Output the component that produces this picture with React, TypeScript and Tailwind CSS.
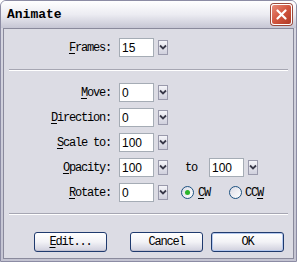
import type { ReactNode } from 'react'

// ─── Bits ─────────────────────────────────────────────────────────────────────

const mono = "font-['Liberation_Mono','DejaVu_Sans_Mono',monospace] text-[12px] tracking-[-1.2px] text-black"

function Label({ text, u = 0 }: { text: string; u?: number }) {
  return (
    <span className={mono}>
      {text.slice(0, u)}
      <span className="underline underline-offset-2">{text[u]}</span>
      {text.slice(u + 1)}
    </span>
  )
}

function Field({ value }: { value: string }) {
  return (
    <div className="w-[35px] h-[19px] bg-white border border-[#a5acb5] flex items-center pl-[2px] font-['Liberation_Sans',Arial,sans-serif] text-[12px] text-black leading-none">
      {value}
    </div>
  )
}

function Drop() {
  return (
    <svg width="10" height="15" viewBox="0 0 10 15" className="ml-[4px] shrink-0">
      <defs>
        <linearGradient id="dg" x1="0" y1="0" x2="0" y2="1">
          <stop offset="0" stopColor="#f6f6fa" />
          <stop offset="1" stopColor="#cfcfdc" />
        </linearGradient>
      </defs>
      <rect x="0.5" y="0.5" width="9" height="14" fill="url(#dg)" stroke="#9a9aac" />
      <path d="M2 5.5 L5 8.5 L8 5.5" fill="none" stroke="#3a3a4a" strokeWidth="1.8" />
    </svg>
  )
}

function Radio({ on }: { on?: boolean }) {
  return (
    <span className="w-[13px] h-[13px] rounded-full border border-[#1c5180] bg-gradient-to-br from-[#dcdce6] to-white flex items-center justify-center shrink-0">
      {on && <span className="w-[5px] h-[5px] rounded-full bg-[#2bb52b]" />}
    </span>
  )
}

function Row({ label, u, value, children }: { label: string; u?: number; value: string; children?: ReactNode }) {
  return (
    <div className="flex items-center h-[19px]">
      <div className="w-[108px] flex justify-end pr-[1px]">
        <Label text={label} u={u} />
      </div>
      <div className="ml-[7px]">
        <Field value={value} />
      </div>
      <Drop />
      {children}
    </div>
  )
}

function Sep() {
  return <div className="mx-[5px] h-[2px] border-t border-[#a6a6b2] border-b border-b-white" />
}

function Btn({ children, def }: { children: ReactNode; def?: boolean }) {
  return (
    <div
      className={
        'w-[73px] h-[20px] rounded-[3px] border border-[#1f3a6e] bg-gradient-to-b from-white via-[#f2f2f6] to-[#cfcfdd] flex items-center justify-center ' +
        (def ? 'shadow-[inset_0_0_0_1px_#b4c8ee]' : 'shadow-[inset_0_-1px_0_#c0c0d0]')
      }
    >
      {children}
    </div>
  )
}

// ─── App ──────────────────────────────────────────────────────────────────────

export default function App() {
  return (
    <div className="w-[297px] h-[262px] flex flex-col rounded-t-[6px] border border-[#8c8ca4] bg-gradient-to-b from-[#d8d8e2] to-[#c4c4d2] overflow-hidden">
      {/* Title bar */}
      <div className="h-[27px] shrink-0 flex items-center justify-between pl-[6px] pr-[4px] bg-gradient-to-b from-white via-[#ececf2] to-[#c6c6d4]">
        <span className="font-['Liberation_Mono','DejaVu_Sans_Mono',monospace] font-bold text-[13px] text-black">Animate</span>
        <div className="w-[21px] h-[21px] rounded-[3px] border border-white bg-gradient-to-br from-[#e88a78] via-[#d2553e] to-[#b03a26] shadow-[0_0_0_1px_#9c4a3c] flex items-center justify-center">
          <svg width="11" height="11" viewBox="0 0 11 11">
            <path d="M1.5 1.5 L9.5 9.5 M9.5 1.5 L1.5 9.5" stroke="white" strokeWidth="2.2" strokeLinecap="round" />
          </svg>
        </div>
      </div>

      {/* Body */}
      <div className="flex-1 mx-[2px] mb-[2px] border border-[#8a8a9c] bg-[#dcdce4] flex flex-col">
        <div className="mt-[9px]">
          <Row label="Frames:" value="15" />
        </div>
        <div className="mt-[12px]">
          <Sep />
        </div>
        <div className="mt-[12px] flex flex-col gap-[6px]">
          <Row label="Move:" value="0" />
          <Row label="Direction:" value="0" />
          <Row label="Scale to:" value="100" />
          <Row label="Opacity:" value="100">
            <span className={mono + ' ml-[17px]'}>to</span>
            <div className="ml-[12px]">
              <Field value="100" />
            </div>
            <Drop />
          </Row>
          <Row label="Rotate:" value="0">
            <div className="ml-[13px] flex items-center gap-[4px]">
              <Radio on />
              <Label text="CW" />
            </div>
            <div className="ml-[19px] flex items-center gap-[3px]">
              <Radio />
              <Label text="CCW" u={2} />
            </div>
          </Row>
        </div>
        <div className="mt-[11px]">
          <Sep />
        </div>
        <div className="mt-[17px] flex">
          <div className="ml-[30px]">
            <Btn>
              <Label text="Edit..." />
            </Btn>
          </div>
          <div className="ml-[23px]">
            <Btn>
              <span className={mono}>Cancel</span>
            </Btn>
          </div>
          <div className="ml-[8px]">
            <Btn def>
              <span className={mono}>OK</span>
            </Btn>
          </div>
        </div>
      </div>
    </div>
  )
}
